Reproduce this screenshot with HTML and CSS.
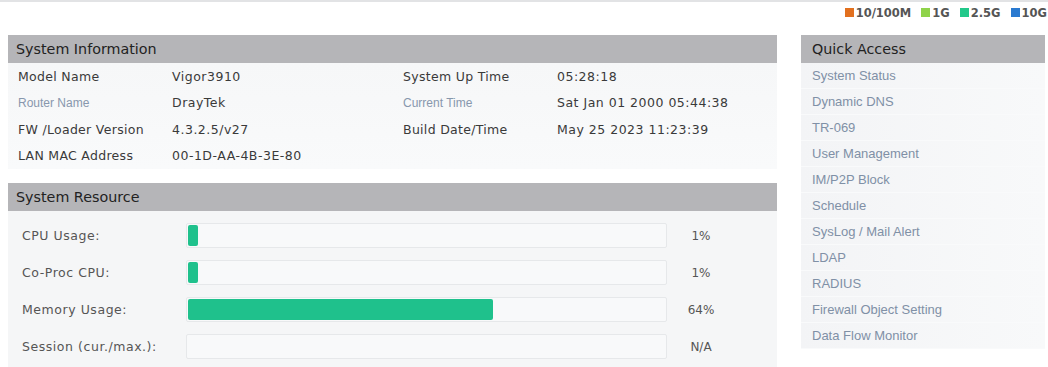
FILE: index.html
```
<!DOCTYPE html>
<html lang="en">
<head>
    <meta charset="UTF-8">
    <meta name="viewport" content="width=device-width, initial-scale=1.0">
    <title>Dashboard</title>
    <link rel="stylesheet" href="styles.css">
</head>
<body>
    <div class="legend">
        <span><i class="sq orange"></i>10/100M</span>
        <span><i class="sq lime"></i>1G</span>
        <span><i class="sq green"></i>2.5G</span>
        <span><i class="sq blue"></i>10G</span>
    </div>
    <main class="layout">
        <div class="left">
            <section class="panel">
                <h2 class="head">System Information</h2>
                <div class="info">
                    <div class="row">
                        <span class="lbl">Model Name</span><span class="val">Vigor3910</span>
                        <span class="lbl2">System Up Time</span><span class="val2">05:28:18</span>
                    </div>
                    <div class="row">
                        <span class="lbl link">Router Name</span><span class="val">DrayTek</span>
                        <span class="lbl2 link">Current Time</span><span class="val2">Sat Jan 01 2000 05:44:38</span>
                    </div>
                    <div class="row">
                        <span class="lbl">FW /Loader Version</span><span class="val">4.3.2.5/v27</span>
                        <span class="lbl2">Build Date/Time</span><span class="val2">May 25 2023 11:23:39</span>
                    </div>
                    <div class="row">
                        <span class="lbl">LAN MAC Address</span><span class="val">00-1D-AA-4B-3E-80</span>
                    </div>
                </div>
            </section>
            <section class="panel resource">
                <h2 class="head">System Resource</h2>
                <div class="usage">
                    <div class="urow">
                        <span class="ulbl">CPU Usage:</span>
                        <div class="track"><div class="fill" style="width: 2%"></div></div>
                        <span class="pct">1%</span>
                    </div>
                    <div class="urow">
                        <span class="ulbl">Co-Proc CPU:</span>
                        <div class="track"><div class="fill" style="width: 2%"></div></div>
                        <span class="pct">1%</span>
                    </div>
                    <div class="urow">
                        <span class="ulbl">Memory Usage:</span>
                        <div class="track"><div class="fill" style="width: 64%"></div></div>
                        <span class="pct">64%</span>
                    </div>
                    <div class="urow">
                        <span class="ulbl">Session (cur./max.):</span>
                        <div class="track"></div>
                        <span class="pct">N/A</span>
                    </div>
                </div>
            </section>
        </div>
        <aside class="quick">
            <h2 class="head">Quick Access</h2>
            <ul class="links">
                <li>System Status</li>
                <li>Dynamic DNS</li>
                <li>TR-069</li>
                <li>User Management</li>
                <li>IM/P2P Block</li>
                <li>Schedule</li>
                <li>SysLog / Mail Alert</li>
                <li>LDAP</li>
                <li>RADIUS</li>
                <li>Firewall Object Setting</li>
                <li>Data Flow Monitor</li>
            </ul>
        </aside>
    </main>
</body>
</html>
```

FILE: styles.css
```
*,
*::before,
*::after{
    padding: 0;
    margin: 0;
    box-sizing: border-box;
}

body{
    background: #fff;
    border-top: 2px solid #e2e3e5;
    font-family: "DejaVu Sans", Verdana, sans-serif;
    color: #333;
}

.legend{
    display: flex;
    justify-content: flex-end;
    gap: 10px;
    height: 33px;
    padding: 3px 1px 0 0;
    font-size: 11.5px;
    font-weight: bold;
    color: #555;
}
.legend span{
    display: flex;
    align-items: center;
    height: 15px;
}
.sq{
    display: inline-block;
    width: 9px;
    height: 9px;
    margin-right: 2px;
}
.sq.orange{ background: #e2701e; }
.sq.lime{ background: #8fd34a; }
.sq.green{ background: #22c88a; }
.sq.blue{ background: #2a7ad0; }

.layout{
    display: flex;
    gap: 24px;
    padding: 0 3px 0 8px;
}
.left{
    width: 769px;
}
.quick{
    flex-grow: 1;
}

.head{
    height: 28px;
    background: #b5b5b8;
    font-size: 14.3px;
    font-weight: normal;
    color: #222;
    line-height: 28px;
    padding-left: 8px;
}
.quick .head{
    padding-left: 11px;
}

.info{
    background: linear-gradient(to bottom, #f6f7f8, #f9fafb);
}
.info .row{
    display: flex;
    height: 26.5px;
    align-items: center;
    font-size: 12.5px;
    letter-spacing: .3px;
    color: #3a3a3a;
}
.info .lbl{
    padding-left: 10px;
    width: 164px;
}
.info .val{
    width: 231px;
    letter-spacing: .5px;
}
.info .lbl2{
    width: 154px;
}
.info .val2{
    letter-spacing: .5px;
}
.info .link{
    font-family: "Liberation Sans", Arial, sans-serif;
    font-size: 12px;
    letter-spacing: 0;
    color: #8797ad;
}

.resource{
    margin-top: 14px;
}
.usage{
    background: #f5f6f7;
    padding-top: 6px;
    height: 160px;
}
.urow{
    display: flex;
    align-items: center;
    height: 37px;
    padding: 6px 0;
    font-size: 12.5px;
    letter-spacing: .55px;
    color: #555;
}
.ulbl{
    width: 178px;
    padding-left: 14px;
}
.track{
    width: 481px;
    height: 25px;
    border: 1px solid #e6e8ea;
    border-radius: 2px;
    background: #f8f9fa;
    padding: 1px;
}
.fill{
    height: 100%;
    background: #1fc18c;
    border-radius: 2px;
}
.pct{
    width: 68px;
    text-align: center;
    font-size: 12px;
    letter-spacing: 0;
}

.links{
    list-style: none;
    background: linear-gradient(to right, #f3f4f6, #f8f9fa);
}
.links li{
    height: 26px;
    line-height: 26px;
    padding-left: 11px;
    font-family: "Liberation Sans", Arial, sans-serif;
    font-size: 13px;
    color: #8090a6;
    border-bottom: 1px solid #f9fafb;
}
```
